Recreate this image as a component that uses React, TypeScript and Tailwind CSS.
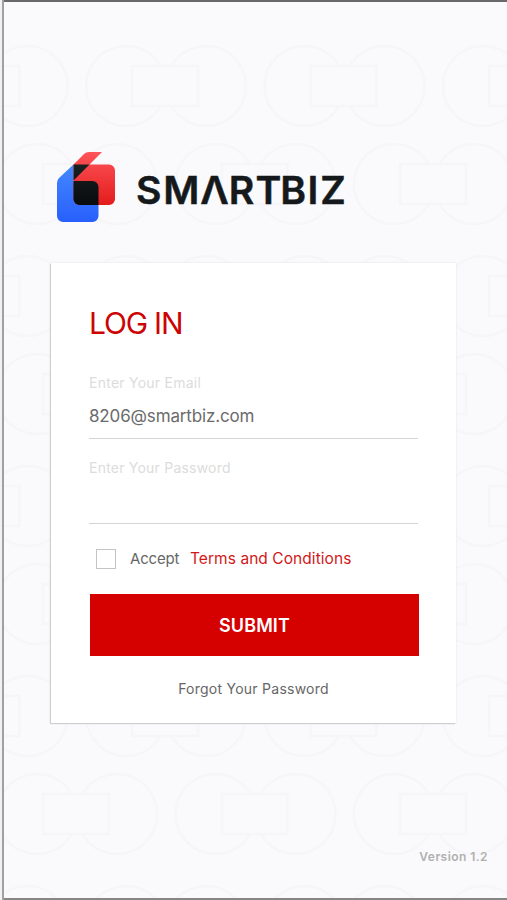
import React, { useState } from "react";

const Backdrop = () => (
  <svg className="absolute inset-0 h-full w-full" aria-hidden="true">
    <defs>
      <g id="pair" fill="none" stroke="#f6f6f8" strokeWidth="2.5">
        <circle cx="0" cy="0" r="40" />
        <circle cx="80" cy="0" r="40" />
        <rect x="6" y="-20" width="66" height="40" fill="#fafafc" />
      </g>
      <pattern id="tiles" x="37" y="-19" width="178.5" height="210" patternUnits="userSpaceOnUse">
        <use href="#pair" x="-89.5" y="105" />
        <use href="#pair" x="89" y="105" />
        <use href="#pair" x="0" y="203" />
        <use href="#pair" x="178.5" y="203" />
        <use href="#pair" x="0" y="-7" />
        <use href="#pair" x="178.5" y="-7" />
      </pattern>
    </defs>
    <rect y="30" width="100%" height="870" fill="url(#tiles)" />
  </svg>
);

const LogoMark = () => (
  <svg width="58" height="70" viewBox="0 0 58 70" aria-hidden="true">
    <defs>
      <linearGradient id="blue" x1="0" y1="0" x2="0" y2="1">
        <stop offset="0" stopColor="#4489ff" />
        <stop offset="1" stopColor="#285ffc" />
      </linearGradient>
      <linearGradient id="red" x1="0" y1="0" x2="0" y2="1">
        <stop offset="0" stopColor="#ff5459" />
        <stop offset="1" stopColor="#e21c1c" />
      </linearGradient>
      <linearGradient id="ink" x1="0" y1="0" x2="0" y2="1">
        <stop offset="0" stopColor="#1b2023" />
        <stop offset="1" stopColor="#080b0d" />
      </linearGradient>
    </defs>
    <path d="M16.5 12.5V29H35.5a6 6 0 0 1 6 6V64a6 6 0 0 1-6 6H6a6 6 0 0 1-6-6V31q0-3 2-5z" fill="url(#blue)" />
    <path d="M16.5 12.5 27 2q2-2 5-2H45L32.5 12.5H52a6 6 0 0 1 6 6V47a6 6 0 0 1-6 6H22.5a6 6 0 0 1-6-6z" fill="url(#red)" />
    <path d="M16.5 12.5h16l-16 16zM16.5 29H35.5a6 6 0 0 1 6 6V53h-19a6 6 0 0 1-6-6z" fill="url(#ink)" />
  </svg>
);

const Wordmark = () => (
  <svg width="230" height="50" viewBox="-4 -8 230 50" className="overflow-visible">
    <text
      x="-1 25.5 61.5 89 115 139 165.5 178"
      y="30.5"
      transform="scale(1.03 1)"
      fill="#15191b"
      stroke="#15191b"
      strokeWidth="0.5"
      className="font-['Inter',sans-serif] text-[38px] font-semibold"
    >
      SMΛRTBIZ
    </text>
  </svg>
);

export default function App() {
  const [email, setEmail] = useState("8206@smartbiz.com");
  const [password, setPassword] = useState("");
  const [accepted, setAccepted] = useState(false);

  return (
    <div className="relative h-[900px] w-[507px] overflow-hidden bg-[#fafafc] font-['Inter',sans-serif]">
      <Backdrop />
      <div className="relative flex h-full flex-col border-t-2 border-b-2 border-t-[#6b6869] border-b-[#868686]">
        <header className="flex h-[261px] shrink-0 items-start pt-[150px] pl-[57px]">
          <LogoMark />
          <div className="mt-[13px] ml-[18px]">
            <Wordmark />
          </div>
        </header>

        <form
          onSubmit={(e) => e.preventDefault()}
          className="ml-[51px] flex h-[460px] w-[405px] shrink-0 flex-col bg-white pr-[37px] pl-[38px] shadow-[-1px_1px_1px_#cfcfd1,0_0_2px_#e4e4e6]"
        >
          <h1 className="mt-[42px] h-[36px] text-[30px] leading-[36px] font-normal tracking-[-1.2px] text-[#cc0405]">LOG IN</h1>

          <label htmlFor="email" className="mt-[32px] h-[20px] text-[14px] leading-[20px] tracking-[0.25px] text-[#dcdcdc]">
            Enter Your Email
          </label>
          <input
            id="email"
            value={email}
            onChange={(e) => setEmail(e.target.value)}
            className="mt-[9px] h-[37px] w-[329px] border-b-[1.5px] border-[#d5d5d5] pb-[9px] text-[17px] tracking-[-0.15px] text-[#6b6b6b] outline-none"
          />

          <label htmlFor="password" className="mt-[19px] h-[20px] text-[14px] leading-[20px] tracking-[0.22px] text-[#dcdcdc]">
            Enter Your Password
          </label>
          <input
            id="password"
            type="password"
            value={password}
            onChange={(e) => setPassword(e.target.value)}
            className="mt-[9px] h-[37px] w-[329px] border-b-[1.5px] border-[#d5d5d5] outline-none"
          />

          <div className="mt-[24px] flex h-[22px] items-center pl-[7px] text-[15px]">
            <input
              type="checkbox"
              checked={accepted}
              onChange={(e) => setAccepted(e.target.checked)}
              className="size-[20px] appearance-none border-[1.5px] border-[#c4c4c4] bg-white checked:bg-[#d50000]"
            />
            <span className="ml-[14px] w-[60px] tracking-[-0.2px] text-[#666]">Accept</span>
            <a href="#terms" className="whitespace-nowrap text-[15.5px] tracking-[0.06px] text-[#d1181b]">Terms and Conditions</a>
          </div>

          <button className="mt-[24px] ml-px h-[62px] w-[329px] bg-[#d50000] text-[18px] font-semibold tracking-[0.1px] text-white">SUBMIT</button>

          <a href="#forgot" className="mt-[23px] ml-[-1px] text-center text-[14px] leading-[20px] tracking-[0.25px] text-[#666]">
            Forgot Your Password
          </a>
        </form>

        <p className="mt-[126px] mr-[19px] text-right text-[12px] leading-[16px] font-semibold tracking-[0.45px] text-[#b0b0b0]">Version 1.2</p>
      </div>
      <div className="absolute inset-y-0 left-0 w-[4px] border-r-[2px] border-[#a0a0a0] bg-[#f1f1f1]" />
    </div>
  );
}
